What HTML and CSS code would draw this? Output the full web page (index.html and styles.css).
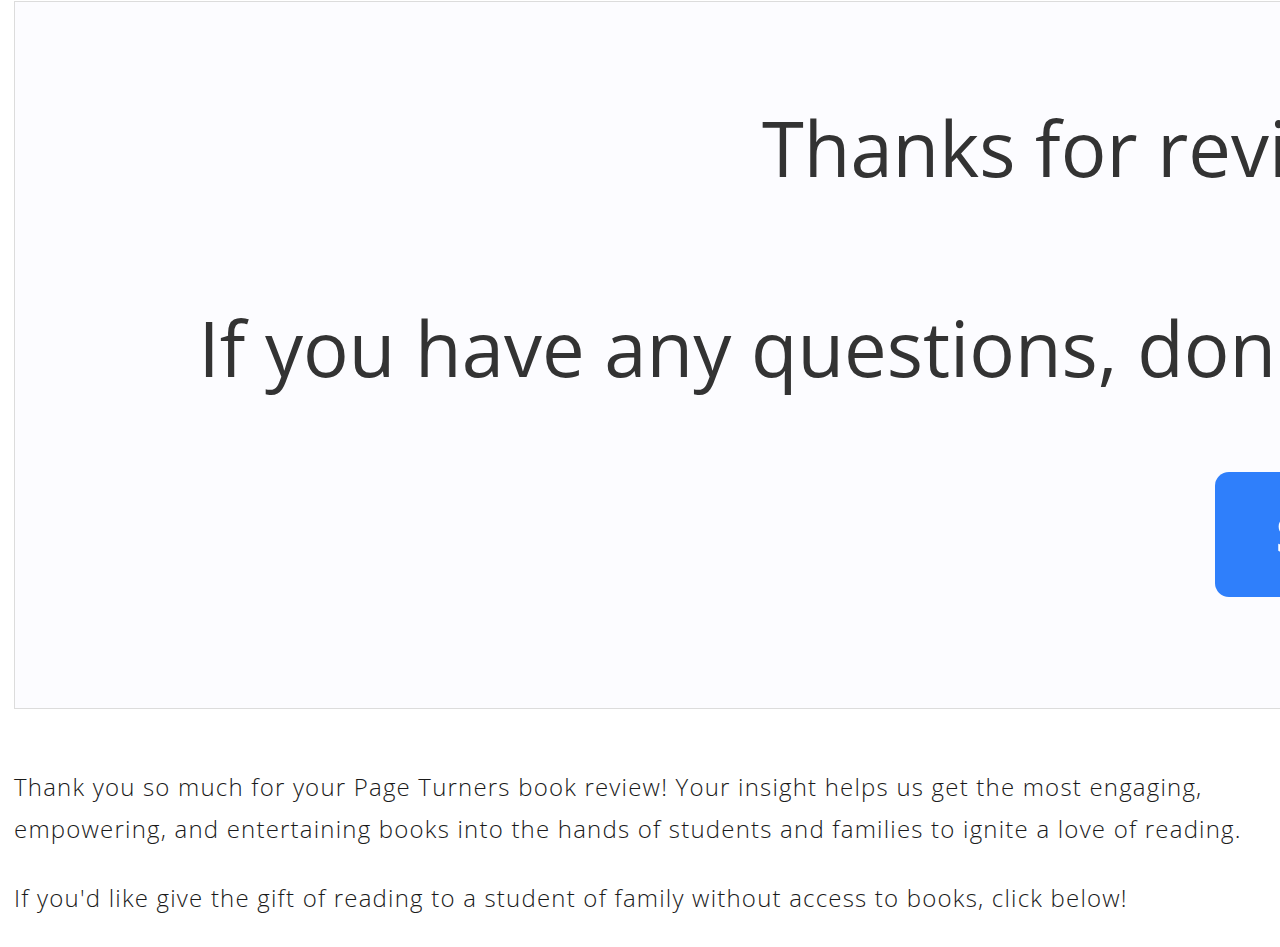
FILE: index.html
```html
<!DOCTYPE html>
<html lang="en">
<head>
    <meta charset="UTF-8">
    <meta name="viewport" content="width=device-width, initial-scale=1.0">
    <title>Thanks for your review</title>
    <link rel="stylesheet" href="styles.css">
</head>
<body>

    <div class="thanks-box">
        <h1>Thanks for reviewing Page Turner!</h1>
        <h2>If you have any questions, don't hesitate to reach out to our team!</h2>
        <a href="#" class="big-button">Submit</a>
    </div>

    <div class="message">
        <p>Thank you so much for your Page Turners book review! Your insight helps us get the most engaging, empowering, and entertaining books into the hands of students and families to ignite a love of reading.</p>
        <p>If you'd like give the gift of reading to a student of family without access to books, click below!</p>
    </div>

</body>
</html>
```

FILE: styles.css
```css
/* Página de agradecimiento */
body {
    margin: 0;
    padding: 1px 14px 0 14px;
    background-color: #ffffff;
    font-family: "Open Sans", Lato, sans-serif;
    color: #1a1a1a;
}
.thanks-box {
    width: 2700px;
    height: 706px;
    border: 1px solid #dcdcdc;
    background-color: #fcfcff;
    display: flex;
    flex-direction: column;
    align-items: center;
    text-align: center;
}
.thanks-box h1, .thanks-box h2 {
    font-family: "Open Sans", sans-serif;
    font-weight: 400;
    font-size: 76px;
    line-height: 80px;
    color: #333;
    margin: 0;
    white-space: nowrap;
}
.thanks-box h1 {
    margin-top: 106px;
}
.thanks-box h2 {
    margin-top: 120px;
}
.big-button {
    margin-top: 84px;
    display: block;
    box-sizing: border-box;
    width: 300px;
    background-color: #2f7ffb;
    color: white;
    text-decoration: none;
    font-family: "Open Sans", sans-serif;
    font-size: 50px;
    font-weight: 700;
    line-height: 125px;
    padding: 0 20px;
    border-radius: 14px;
}
.message {
    margin-top: 57px;
    width: 1252px;
}
.message p {
    font-size: 24px;
    font-weight: 300;
    letter-spacing: 1.2px;
    line-height: 42px;
    margin: 0 0 27px 0;
}
```
